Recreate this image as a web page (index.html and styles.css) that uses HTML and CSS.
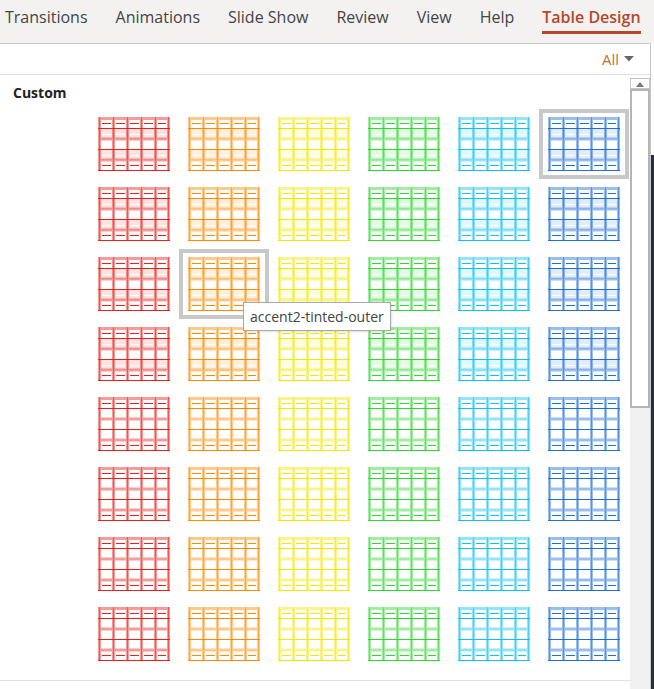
FILE: index.html
```html
<!DOCTYPE html>
<html>
<head>
<meta charset="utf-8">
<link rel="stylesheet" href="styles.css">
</head>
<body>
<svg class="defs" aria-hidden="true">
  <symbol id="tf" viewBox="0 0 72 54">
    <path fill="currentColor" fill-opacity=".13" d="M1 11.5h70v10.5H1zM1 32.5h70V43H1z"/>
    <path fill="none" stroke="currentColor" stroke-opacity=".45" stroke-width="3" d="M1.5 0v54M15.5 0v54M29.5 0v54M43.5 0v54M57.5 0v54M70.5 0v54M0 1.5h72M0 22h72M0 43h72"/>
    <path fill="none" stroke="currentColor" stroke-opacity=".55" d="M1.5 0v54M15.5 0v54M29.5 0v54M43.5 0v54M57.5 0v54M70.5 0v54"/>
    <path fill="none" stroke="currentColor" d="M0 11.5h72M0 32.5h72M0 53.5h72"/>
    <path fill="none" stroke="currentColor" d="M4 6.5h9M18 6.5h9M32 6.5h9M46 6.5h9M60 6.5h8M4 48.5h9M18 48.5h9M32 48.5h9M46 48.5h9M60 48.5h8"/>
    <path fill="none" stroke="#fff" d="M4 17.5h9M18 17.5h9M32 17.5h9M46 17.5h9M60 17.5h8M4 38.5h9M18 38.5h9M32 38.5h9M46 38.5h9M60 38.5h8"/>
  </symbol>
  <symbol id="tn" viewBox="0 0 72 54">
    <path fill="none" stroke="currentColor" stroke-opacity=".45" stroke-width="3" d="M1.5 0v54M15.5 0v54M29.5 0v54M43.5 0v54M57.5 0v54M70.5 0v54M0 1.5h72M0 22h72M0 43h72"/>
    <path fill="none" stroke="currentColor" stroke-opacity=".55" d="M1.5 0v54M15.5 0v54M29.5 0v54M43.5 0v54M57.5 0v54M70.5 0v54"/>
    <path fill="none" stroke="currentColor" d="M0 11.5h72M0 32.5h72M0 53.5h72"/>
    <path fill="none" stroke="currentColor" d="M4 6.5h9M18 6.5h9M32 6.5h9M46 6.5h9M60 6.5h8M4 48.5h9M18 48.5h9M32 48.5h9M46 48.5h9M60 48.5h8"/>
  </symbol>
</svg>

<div class="ribbon">
  <div class="tab">Transitions</div>
  <div class="tab">Animations</div>
  <div class="tab">Slide Show</div>
  <div class="tab">Review</div>
  <div class="tab">View</div>
  <div class="tab">Help</div>
  <div class="tab active">Table Design</div>
</div>

<div class="main">
  <div class="panel">
    <div class="panel-head">
      <span class="filter">All</span>
      <svg class="caret" width="10" height="6" viewBox="0 0 10 6"><path d="M0 0h10L5 5.5z" fill="#666"/></svg>
    </div>
    <div class="panel-body">
      <div class="content">
        <div class="custom">Custom</div>
        <div class="grid">
          <div class="cell"><svg class="thumb c1"><use href="#tf"/></svg></div>
          <div class="cell"><svg class="thumb c2"><use href="#tf"/></svg></div>
          <div class="cell"><svg class="thumb c3"><use href="#tf"/></svg></div>
          <div class="cell"><svg class="thumb c4"><use href="#tf"/></svg></div>
          <div class="cell"><svg class="thumb c5"><use href="#tf"/></svg></div>
          <div class="cell sel"><svg class="thumb c6"><use href="#tf"/></svg></div>

          <div class="cell"><svg class="thumb c1"><use href="#tf"/></svg></div>
          <div class="cell"><svg class="thumb c2"><use href="#tf"/></svg></div>
          <div class="cell"><svg class="thumb c3"><use href="#tf"/></svg></div>
          <div class="cell"><svg class="thumb c4"><use href="#tf"/></svg></div>
          <div class="cell"><svg class="thumb c5"><use href="#tf"/></svg></div>
          <div class="cell"><svg class="thumb c6"><use href="#tf"/></svg></div>

          <div class="cell"><svg class="thumb c1"><use href="#tf"/></svg></div>
          <div class="cell sel"><svg class="thumb c2"><use href="#tf"/></svg></div>
          <div class="cell"><svg class="thumb c3"><use href="#tf"/></svg></div>
          <div class="cell"><svg class="thumb c4"><use href="#tf"/></svg></div>
          <div class="cell"><svg class="thumb c5"><use href="#tf"/></svg></div>
          <div class="cell"><svg class="thumb c6"><use href="#tf"/></svg></div>

          <div class="cell"><svg class="thumb c1"><use href="#tf"/></svg></div>
          <div class="cell"><svg class="thumb c2"><use href="#tf"/></svg></div>
          <div class="cell"><svg class="thumb c3"><use href="#tf"/></svg></div>
          <div class="cell"><svg class="thumb c4"><use href="#tf"/></svg></div>
          <div class="cell"><svg class="thumb c5"><use href="#tf"/></svg></div>
          <div class="cell"><svg class="thumb c6"><use href="#tf"/></svg></div>

          <div class="cell"><svg class="thumb c1"><use href="#tn"/></svg></div>
          <div class="cell"><svg class="thumb c2"><use href="#tn"/></svg></div>
          <div class="cell"><svg class="thumb c3"><use href="#tn"/></svg></div>
          <div class="cell"><svg class="thumb c4"><use href="#tn"/></svg></div>
          <div class="cell"><svg class="thumb c5"><use href="#tn"/></svg></div>
          <div class="cell"><svg class="thumb c6"><use href="#tn"/></svg></div>

          <div class="cell"><svg class="thumb c1"><use href="#tn"/></svg></div>
          <div class="cell"><svg class="thumb c2"><use href="#tn"/></svg></div>
          <div class="cell"><svg class="thumb c3"><use href="#tn"/></svg></div>
          <div class="cell"><svg class="thumb c4"><use href="#tn"/></svg></div>
          <div class="cell"><svg class="thumb c5"><use href="#tn"/></svg></div>
          <div class="cell"><svg class="thumb c6"><use href="#tn"/></svg></div>

          <div class="cell"><svg class="thumb c1"><use href="#tn"/></svg></div>
          <div class="cell"><svg class="thumb c2"><use href="#tn"/></svg></div>
          <div class="cell"><svg class="thumb c3"><use href="#tn"/></svg></div>
          <div class="cell"><svg class="thumb c4"><use href="#tn"/></svg></div>
          <div class="cell"><svg class="thumb c5"><use href="#tn"/></svg></div>
          <div class="cell"><svg class="thumb c6"><use href="#tn"/></svg></div>

          <div class="cell"><svg class="thumb c1"><use href="#tn"/></svg></div>
          <div class="cell"><svg class="thumb c2"><use href="#tn"/></svg></div>
          <div class="cell"><svg class="thumb c3"><use href="#tn"/></svg></div>
          <div class="cell"><svg class="thumb c4"><use href="#tn"/></svg></div>
          <div class="cell"><svg class="thumb c5"><use href="#tn"/></svg></div>
          <div class="cell"><svg class="thumb c6"><use href="#tn"/></svg></div>

          <div class="tooltip">accent2-tinted-outer</div>
        </div>
        <div class="sep"></div>
      </div>
      <div class="scroll">
        <div class="up"><svg width="8" height="5" viewBox="0 0 8 5"><path d="M0 5L4 0l4 5z" fill="#777"/></svg></div>
        <div class="bar"></div>
      </div>
    </div>
  </div>
  <div class="edge">
    <div class="edge-top"></div>
    <div class="edge-dark"></div>
  </div>
</div>
</body>
</html>
```
FILE: styles.css
```css
* { box-sizing: border-box; }
html, body { margin: 0; padding: 0; }
body {
  width: 654px;
  height: 689px;
  overflow: hidden;
  background: #fff;
  font-family: "Open Sans", "Noto Sans", sans-serif;
  color: #444;
}
.defs { position: absolute; width: 0; height: 0; overflow: hidden; }

.ribbon {
  height: 43px;
  background: #f3f2f1;
  display: flex;
  align-items: flex-start;
  gap: 28px;
  padding-left: 5px;
  white-space: nowrap;
}
.tab {
  font-size: 16px;
  line-height: 22px;
  padding-top: 6px;
  padding-bottom: 3px;
  color: #444;
}
.tab.active {
  color: #b7472a;
  font-weight: 600;
  border-bottom: 3px solid #b7472a;
}

.main { display: flex; height: 646px; }
.panel {
  width: 651px;
  border-top: 1px solid #c8c8c8;
  border-right: 1px solid #c8c8c8;
  display: flex;
  flex-direction: column;
}
.panel-head {
  height: 31px;
  border-bottom: 1px solid #e1e1e1;
  display: flex;
  justify-content: flex-end;
  align-items: center;
  gap: 5px;
  padding-right: 16px;
}
.filter { font-size: 15px; color: #c0703a; }
.caret { display: block; }

.panel-body { flex: 1; display: flex; }
.content { width: 630px; }
.custom {
  height: 34px;
  padding: 8px 0 0 13px;
  font-size: 14px;
  line-height: 20px;
  font-weight: 700;
  color: #222;
}
.grid {
  position: relative;
  margin-left: 89px;
  display: grid;
  grid-template-columns: repeat(6, 90px);
  grid-auto-rows: 70px;
}
.cell { display: flex; align-items: center; justify-content: center; }
.cell.sel { border: 4px solid #c8c8c8; }
.thumb { width: 72px; height: 54px; display: block; }
.c1 { color: #e8231f; }
.c2 { color: #ff8a00; }
.c3 { color: #f2e800; }
.c4 { color: #2fd82f; }
.c5 { color: #10c0f4; }
.c6 { color: #1f6fd6; }

.tooltip {
  position: absolute;
  left: 154px;
  top: 193px;
  padding: 4px 6px;
  border: 1px solid #a9a9a9;
  background: #fff;
  font-size: 14px;
  line-height: 19px;
  color: #444;
  white-space: nowrap;
  box-shadow: 1px 1px 2px rgba(0,0,0,.12);
}
.sep { margin-top: 11px; border-top: 1px solid #e1e1e1; }

.scroll {
  width: 20px;
  margin-top: 3px;
  background: #f0f0f0;
  display: flex;
  flex-direction: column;
}
.up {
  height: 11px;
  background: #fff;
  border: 1px solid #c4c4c4;
  display: flex;
  align-items: flex-end;
  justify-content: center;
  padding-bottom: 1px;
}
.up svg { display: block; }
.bar {
  height: 319px;
  background: #fff;
  border: 2px solid #b5b5b5;
}

.edge { width: 3px; display: flex; flex-direction: column; }
.edge-top { height: 112px; background: #fff; }
.edge-dark { flex: 1; background: #2a2e3b; }
```
